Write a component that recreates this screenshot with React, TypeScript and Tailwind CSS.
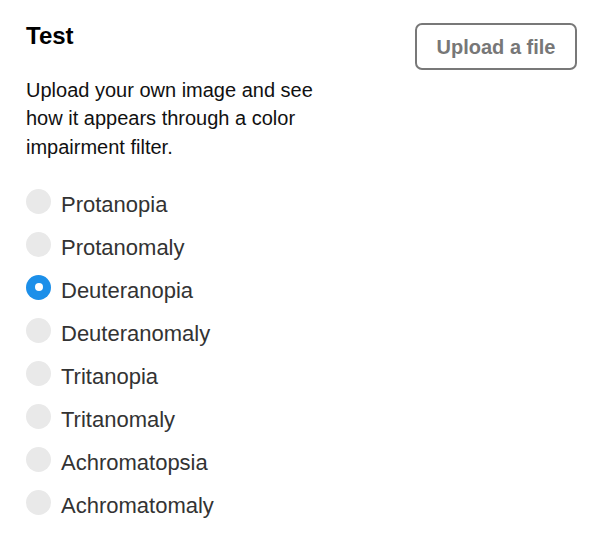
import { useState } from 'react';

const FILTERS = [
    'Protanopia',
    'Protanomaly',
    'Deuteranopia',
    'Deuteranomaly',
    'Tritanopia',
    'Tritanomaly',
    'Achromatopsia',
    'Achromatomaly',
];

export default function App() {
    const [selected, setSelected] = useState('Deuteranopia');

    return (
        <div className="min-h-screen bg-white pl-[26px] pr-[34px] pt-[20px] font-['Liberation_Sans',Arial,sans-serif]">
            <div className="flex items-start justify-between">
                <div>
                    <h1 className="text-[24px] leading-[32px] font-bold text-black">Test</h1>
                    <p className="mt-[24px] w-[300px] text-[20px] leading-[28.3px] text-[#111]">
                        Upload your own image and see how it appears through a color impairment filter.
                    </p>
                </div>
                <button
                    type="button"
                    className="mt-[3px] h-[47px] w-[162px] rounded-[7px] border-2 border-[#787878] text-[20px] font-bold text-[#777]"
                >
                    Upload a file
                </button>
            </div>

            <div className="mt-[22px] flex flex-col">
                {FILTERS.map((name) => {
                    const active = name === selected;
                    return (
                        <label
                            key={name}
                            onClick={() => setSelected(name)}
                            className="flex h-[43px] cursor-pointer items-start gap-[10px]"
                        >
                            <span
                                className={`mt-[6px] flex h-[25px] w-[25px] shrink-0 items-center justify-center rounded-full ${active ? 'bg-[#1c8fe9]' : 'bg-[#e9e9e9]'}`}
                            >
                                {active && <span className="h-[8px] w-[8px] rounded-full bg-white" />}
                            </span>
                            <span className="text-[22px] leading-[43px] text-[#333]">{name}</span>
                        </label>
                    );
                })}
            </div>
        </div>
    );
}
